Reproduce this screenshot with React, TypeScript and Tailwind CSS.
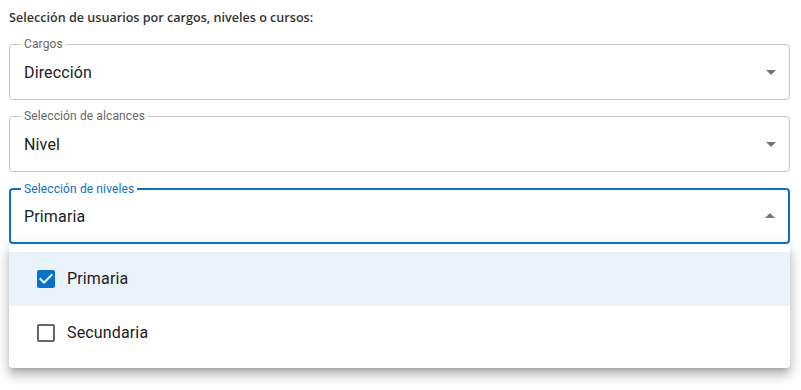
const BLUE = '#0b70c8';

function ArrowIcon({ up }: { up?: boolean }) {
  return (
    <svg className="w-6 h-6 shrink-0" viewBox="0 0 24 24" fill="#757575">
      {up ? <path d="M7 14l5-5 5 5z" /> : <path d="M7 10l5 5 5-5z" />}
    </svg>
  );
}

function Field({ label, value, focused }: { label: string; value: string; focused?: boolean }) {
  return (
    <div
      className={
        'relative h-14 rounded flex items-center pl-[14px] pr-[6px] ' +
        (focused ? 'border-2 border-[#0b70c8]' : 'border border-[#c4c4c4]')
      }
    >
      <span
        className={
          'absolute top-[-8px] px-[3px] bg-white text-xs leading-[14px] tracking-[0.12px] ' +
          (focused ? 'left-[10px] text-[#0b70c8]' : 'left-[11px] text-[#666666]')
        }
      >
        {label}
      </span>
      <span className={'flex-1 text-base leading-5 pt-px tracking-[0.15px] text-[#212121] ' + (focused ? 'ml-[-1px]' : '')}>
        {value}
      </span>
      <ArrowIcon up={focused} />
    </div>
  );
}

function CheckIcon({ checked }: { checked: boolean }) {
  return (
    <svg className="w-6 h-6" viewBox="0 0 24 24" fill={checked ? BLUE : '#666666'}>
      {checked ? (
        <path d="M19 3H5c-1.11 0-2 .9-2 2v14c0 1.1.89 2 2 2h14c1.11 0 2-.9 2-2V5c0-1.1-.89-2-2-2zm-9 14l-5-5 1.41-1.41L10 14.17l7.59-7.59L19 8l-9 9z" />
      ) : (
        <path d="M19 5v14H5V5h14m0-2H5c-1.1 0-2 .9-2 2v14c0 1.1.9 2 2 2h14c1.1 0 2-.9 2-2V5c0-1.1-.9-2-2-2z" />
      )}
    </svg>
  );
}

export default function App() {
  const options = [
    { label: 'Primaria', checked: true },
    { label: 'Secundaria', checked: false },
  ];

  return (
    <div className="w-[801px] h-[390px] bg-white pl-[9px] pr-[11px] pt-2" style={{ fontFamily: 'Roboto, sans-serif' }}>
      <h2
        className="text-[12.6px] leading-5 font-semibold text-[#333333] mb-4"
        style={{ fontFamily: '"Open Sans", sans-serif' }}
      >
        Selección de usuarios por cargos, niveles o cursos:
      </h2>
      <div className="flex flex-col gap-4">
        <Field label="Cargos" value="Dirección" />
        <Field label="Selección de alcances" value="Nivel" />
        <Field label="Selección de niveles" value="Primaria" focused />
      </div>
      <div className="bg-white rounded py-2 shadow-[0px_5px_5px_-3px_rgba(0,0,0,0.2),0px_8px_10px_1px_rgba(0,0,0,0.14),0px_3px_14px_2px_rgba(0,0,0,0.12)]">
        {options.map((o) => (
          <div
            key={o.label}
            className={'h-[54px] flex items-center pl-4 ' + (o.checked ? 'bg-[#eaf2fb]' : '')}
          >
            <div className="p-[9px]">
              <CheckIcon checked={o.checked} />
            </div>
            <span className="text-base tracking-[0.15px] text-[#212121]">{o.label}</span>
          </div>
        ))}
      </div>
    </div>
  );
}
